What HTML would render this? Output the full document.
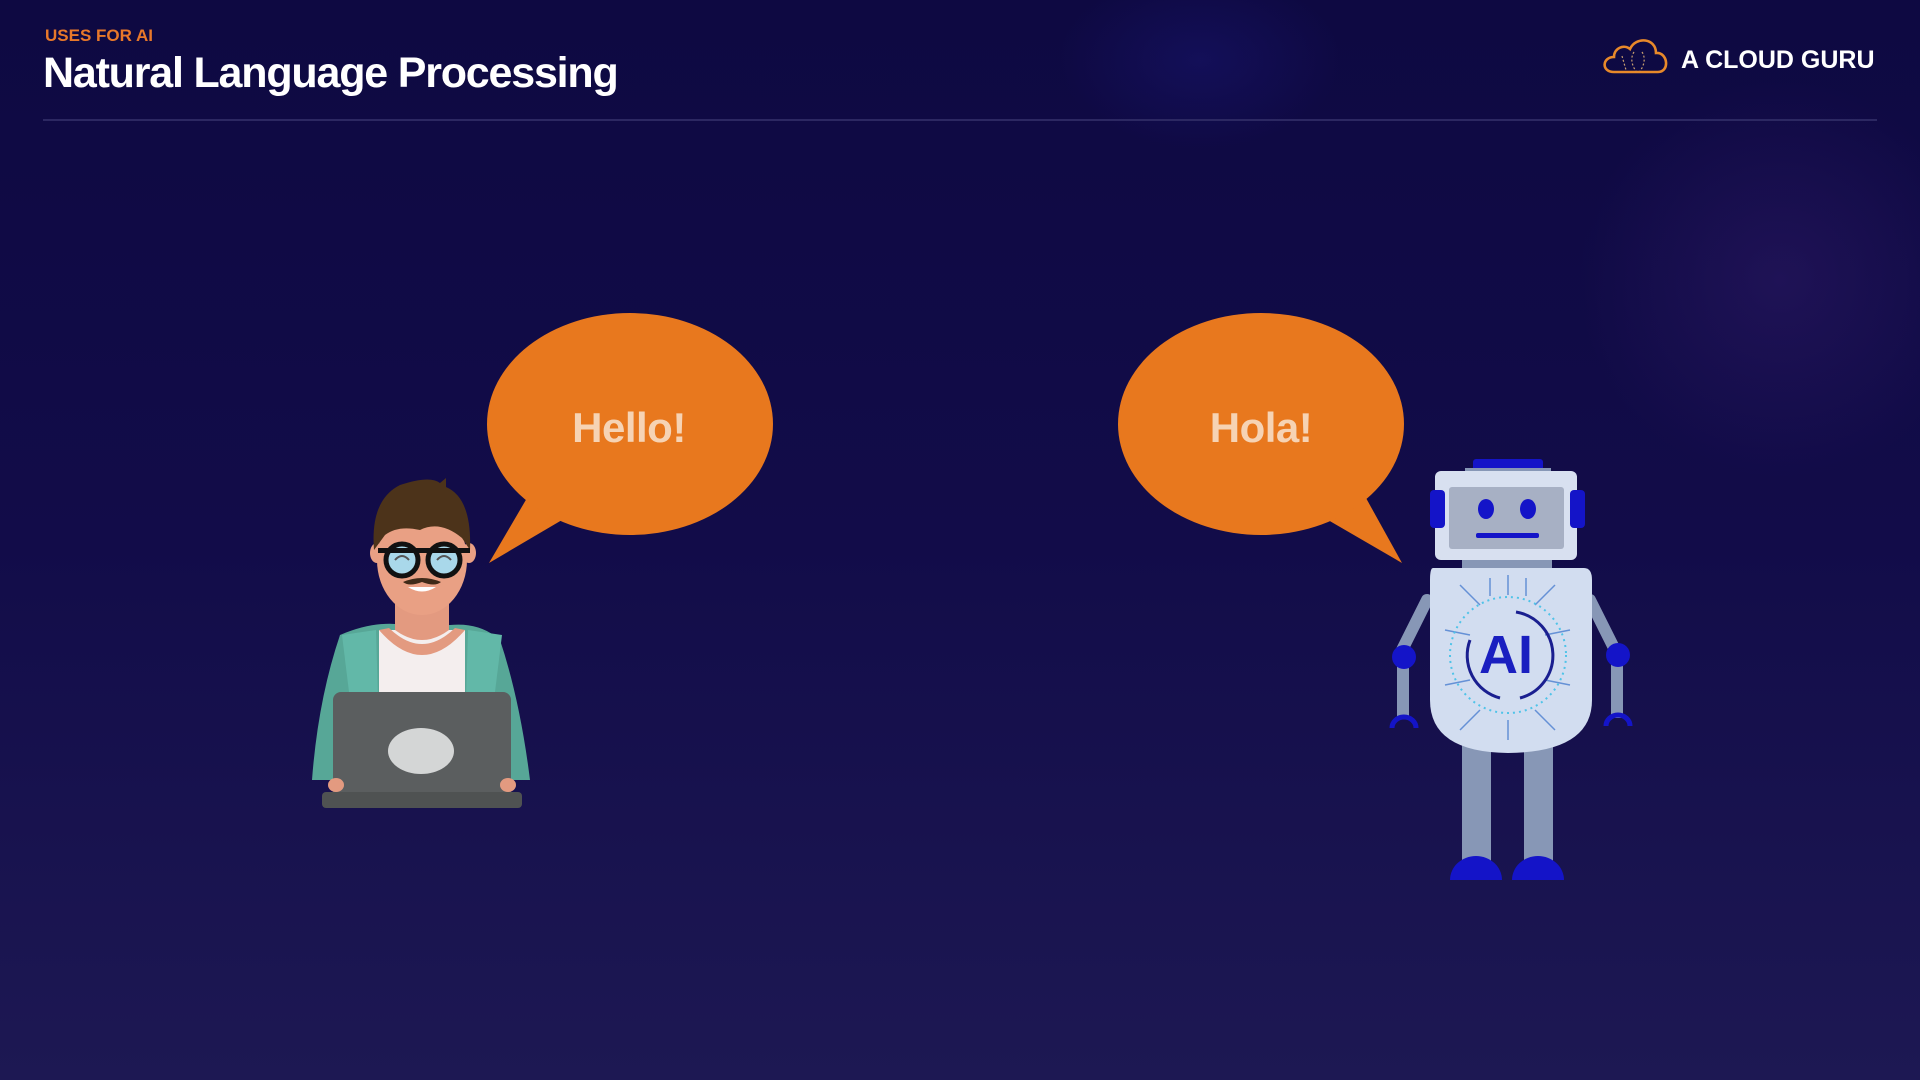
<!DOCTYPE html>
<html><head><meta charset="utf-8"><style>
html,body{margin:0;padding:0;width:1920px;height:1080px;overflow:hidden;background:#100b46}
svg{display:block}
</style></head><body>
<svg width="1920" height="1080" viewBox="0 0 1920 1080" xmlns="http://www.w3.org/2000/svg">
<defs>
<linearGradient id="bg" x1="0" y1="0" x2="0" y2="1">
<stop offset="0" stop-color="#0e0942"/><stop offset="0.5" stop-color="#120c49"/><stop offset="1" stop-color="#1d1853"/>
</linearGradient>
<radialGradient id="glow" cx="0.5" cy="0.5" r="0.5">
<stop offset="0" stop-color="#2e1a66" stop-opacity="0.5"/><stop offset="1" stop-color="#2e1a66" stop-opacity="0"/>
</radialGradient>
<radialGradient id="glow2" cx="0.5" cy="0.5" r="0.5">
<stop offset="0" stop-color="#1c1a80" stop-opacity="0.35"/><stop offset="1" stop-color="#1c1a80" stop-opacity="0"/>
</radialGradient>
</defs>
<rect width="1920" height="1080" fill="url(#bg)"/>
<ellipse cx="1780" cy="280" rx="200" ry="200" fill="url(#glow)"/>
<ellipse cx="1200" cy="60" rx="140" ry="90" fill="url(#glow2)"/>

<text x="45" y="41" font-family="Liberation Sans, sans-serif" font-weight="700" font-size="17" fill="#e8782a">USES FOR AI</text>
<text x="43" y="87" font-family="Liberation Sans, sans-serif" font-weight="700" font-size="43" fill="#ffffff" letter-spacing="-1.2">Natural Language Processing</text>
<rect x="43" y="119" width="1834" height="2" fill="#2c2862"/>

<!-- logo -->
<path d="M1614 72 C1601 72 1602 57 1614 57 C1614 48 1624 44 1630 49 C1636 36 1656 38 1656 53 C1668 52 1670 72 1658 72 Z" fill="none" stroke="#e8892a" stroke-width="2.6"/>
<path d="M1622 56 l4 14 M1634 52 c-4 6 -2 14 2 19 M1642 52 c4 6 2 14 -2 19" stroke="#c9a070" stroke-width="1.2" stroke-dasharray="2 2" fill="none"/>
<text x="1681" y="68" font-family="Liberation Sans, sans-serif" font-weight="700" font-size="25" fill="#ffffff">A CLOUD GURU</text>

<!-- bubble 1 -->
<path d="M527 498 L489 563 L562 520 Z" fill="#e8781e"/>
<ellipse cx="630" cy="424" rx="143" ry="111" fill="#e8781e"/>
<text x="629" y="442" text-anchor="middle" font-family="Liberation Sans, sans-serif" font-weight="700" font-size="42" fill="#f6d3b4" letter-spacing="-0.5">Hello!</text>

<!-- bubble 2 -->
<path d="M1366 498 L1402 563 L1328 520 Z" fill="#e8781e"/>
<ellipse cx="1261" cy="424" rx="143" ry="111" fill="#e8781e"/>
<text x="1261" y="442" text-anchor="middle" font-family="Liberation Sans, sans-serif" font-weight="700" font-size="42" fill="#f6d3b4" letter-spacing="-0.5">Hola!</text>

<!-- person -->
<g>
<path d="M340 635 Q375 620 405 625 L450 625 Q480 622 500 640 Q520 700 530 780 L312 780 Q318 700 340 635 Z" fill="#57a797"/>
<rect x="379" y="630" width="86" height="80" fill="#f4eeee"/>
<path d="M395 600 L395 630 Q422 650 449 630 L449 600 Z" fill="#e39a80"/>
<path d="M379 630 Q422 680 465 630 L455 628 Q422 660 389 628 Z" fill="#e39a80"/>
<path d="M342 635 L376 630 L378 700 L350 700 Z" fill="#62b8a8"/>
<path d="M502 635 L468 630 L466 700 L494 700 Z" fill="#62b8a8"/>
<ellipse cx="422" cy="560" rx="45" ry="55" fill="#e9a084"/>
<ellipse cx="377" cy="553" rx="7" ry="10" fill="#e9a084"/>
<ellipse cx="469" cy="553" rx="7" ry="10" fill="#e9a084"/>
<path d="M374 550 Q370 500 400 485 Q430 475 440 483 L446 478 L446 487 Q472 498 470 550 L462 538 Q440 520 420 530 Q398 525 385 535 Z" fill="#4c331a"/>
<circle cx="402" cy="560" r="16" fill="#a9d8ea" stroke="#111" stroke-width="5"/>
<circle cx="444" cy="560" r="16" fill="#a9d8ea" stroke="#111" stroke-width="5"/>
<rect x="378" y="548" width="92" height="5" fill="#111"/>
<path d="M395 560 q7 -8 14 0 M437 560 q7 -8 14 0" stroke="#555" stroke-width="2" fill="none"/>
<path d="M403 582 Q422 574 441 582 Q435 587 422 582 Q409 587 403 582 Z" fill="#3f2a18"/>
<path d="M408 587 Q422 596 436 587 Z" fill="#fff"/>
<rect x="333" y="692" width="178" height="110" rx="8" fill="#5b5e5f"/>
<ellipse cx="421" cy="751" rx="33" ry="23" fill="#d4d6d6"/>
<rect x="322" y="792" width="200" height="16" rx="4" fill="#4f5252"/>
<ellipse cx="336" cy="785" rx="8" ry="7" fill="#e39a80"/>
<ellipse cx="508" cy="785" rx="8" ry="7" fill="#e39a80"/>
</g>

<!-- robot -->
<g>
<path d="M1427 600 L1402 650" stroke="#8797b6" stroke-width="12" stroke-linecap="round"/>
<path d="M1590 600 L1615 650" stroke="#8797b6" stroke-width="12" stroke-linecap="round"/>
<rect x="1397" y="660" width="12" height="58" fill="#8797b6"/>
<rect x="1611" y="660" width="12" height="58" fill="#8797b6"/>
<circle cx="1404" cy="657" r="12" fill="#1414c8"/>
<circle cx="1618" cy="655" r="12" fill="#1414c8"/>
<path d="M1392 728 a12 11 0 0 1 24 0" fill="none" stroke="#1414c8" stroke-width="5"/>
<path d="M1606 726 a12 11 0 0 1 24 0" fill="none" stroke="#1414c8" stroke-width="5"/>
<rect x="1462" y="740" width="29" height="125" fill="#8797b6"/>
<rect x="1524" y="740" width="29" height="125" fill="#8797b6"/>
<path d="M1450 880 a26 24 0 0 1 52 0 Z" fill="#1414c8"/>
<path d="M1512 880 a26 24 0 0 1 52 0 Z" fill="#1414c8"/>
<rect x="1462" y="555" width="90" height="15" fill="#8797b6"/>
<path d="M1433 568 L1584 568 Q1592 568 1592 580 L1592 700 Q1592 752 1508 753 Q1430 752 1430 700 L1430 580 Q1430 568 1433 568 Z" fill="#d2ddf0"/>
<g stroke="#4a7ed0" stroke-width="1.5" fill="none" opacity="0.8">
<path d="M1460 585 l20 20 M1555 585 l-20 20 M1460 730 l20 -20 M1555 730 l-20 -20 M1445 630 l25 5 M1570 630 l-25 5 M1445 685 l25 -5 M1570 685 l-25 -5 M1508 575 v20 M1508 740 v-20 M1490 578 v18 M1526 578 v18"/>
</g>
<circle cx="1508" cy="655" r="58" fill="none" stroke="#4fc3e8" stroke-width="2" stroke-dasharray="2 4"/>
<path d="M1516 612 A44 44 0 0 1 1520 698" fill="none" stroke="#1a1f90" stroke-width="3"/>
<path d="M1500 698 A44 44 0 0 1 1470 640" fill="none" stroke="#1a1f90" stroke-width="3"/>
<text x="1506" y="673" text-anchor="middle" font-family="Liberation Sans, sans-serif" font-weight="700" font-size="54" fill="#1a1fc0">AI</text>
<rect x="1473" y="459" width="70" height="12" rx="3" fill="#1414c8"/>
<rect x="1465" y="468" width="86" height="6" fill="#8797b6"/>
<rect x="1435" y="471" width="142" height="89" rx="6" fill="#d8e0f0"/>
<rect x="1449" y="487" width="115" height="62" rx="3" fill="#a7b0c4"/>
<rect x="1430" y="490" width="15" height="38" rx="4" fill="#1414c8"/>
<rect x="1570" y="490" width="15" height="38" rx="4" fill="#1414c8"/>
<ellipse cx="1486" cy="509" rx="8" ry="10" fill="#1414c8"/>
<ellipse cx="1528" cy="509" rx="8" ry="10" fill="#1414c8"/>
<rect x="1476" y="533" width="63" height="5" rx="2" fill="#1414c8"/>
</g>
</svg>
</body></html>
